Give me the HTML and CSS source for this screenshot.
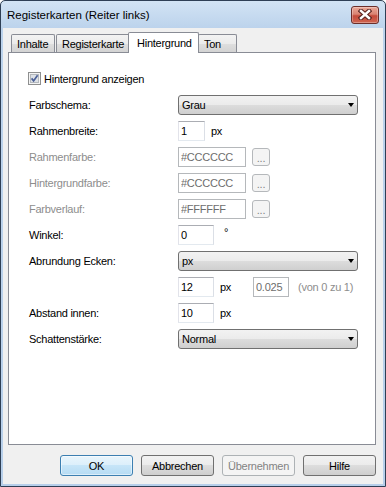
FILE: index.html
```html
<!DOCTYPE html>
<html lang="de">

<head>
    <meta charset="UTF-8">
    <meta name="viewport" content="width=device-width, initial-scale=1.0">
    <title>Registerkarten (Reiter links)</title>
    <link rel="stylesheet" href="styles.css">
</head>

<body>
    <div class="window">
        <div class="titlebar">
            <span class="title">Registerkarten (Reiter links)</span>
            <div class="close-btn">
                <svg width="14" height="11" viewBox="0 0 14 11">
                    <path d="M3 2 L11 9 M11 2 L3 9" stroke="#5b2621" stroke-width="4.6" stroke-linecap="square" fill="none"/>
                    <path d="M3 2 L11 9 M11 2 L3 9" stroke="#fff" stroke-width="2.4" stroke-linecap="square" fill="none"/>
                </svg>
            </div>
        </div>
        <div class="client">
            <div class="tabs">
                <div class="tab tab-inhalte">Inhalte</div>
                <div class="tab tab-register">Registerkarte</div>
                <div class="tab tab-active">Hintergrund</div>
                <div class="tab tab-ton">Ton</div>
            </div>
            <div class="panel">
                <div class="check-row">
                    <span class="checkbox">
                        <svg width="13" height="13" viewBox="0 0 13 13">
                            <rect x="0.5" y="0.5" width="12" height="12" fill="#f4f4f4" stroke="#8e8f8f"/>
                            <rect x="2.5" y="2.5" width="8" height="8" fill="#dde1e6" stroke="#b4b8bd"/>
                            <path d="M3.6 6.4 L5.6 8.9 L9.6 3.3" fill="none" stroke="#4a5f97" stroke-width="1.7"/>
                        </svg>
                    </span>
                    Hintergrund anzeigen
                </div>
                <div class="form">
                    <div class="row">
                        <span class="label">Farbschema:</span>
                        <div class="combo"><span>Grau</span><span class="arrow"></span></div>
                    </div>
                    <div class="row">
                        <span class="label">Rahmenbreite:</span>
                        <input class="textbox w27" type="text" value="1">
                        <span class="unit">px</span>
                    </div>
                    <div class="row">
                        <span class="label disabled">Rahmenfarbe:</span>
                        <input class="textbox w68" type="text" value="#CCCCCC" disabled>
                        <span class="dots">...</span>
                    </div>
                    <div class="row">
                        <span class="label disabled">Hintergrundfarbe:</span>
                        <input class="textbox w68" type="text" value="#CCCCCC" disabled>
                        <span class="dots">...</span>
                    </div>
                    <div class="row">
                        <span class="label disabled">Farbverlauf:</span>
                        <input class="textbox w68" type="text" value="#FFFFFF" disabled>
                        <span class="dots">...</span>
                    </div>
                    <div class="row">
                        <span class="label">Winkel:</span>
                        <input class="textbox w36" type="text" value="0">
                        <span class="unit degree">°</span>
                    </div>
                    <div class="row">
                        <span class="label">Abrundung Ecken:</span>
                        <div class="combo"><span>px</span><span class="arrow"></span></div>
                    </div>
                    <div class="row">
                        <span class="label"></span>
                        <input class="textbox w36" type="text" value="12">
                        <span class="unit unit-wide">px</span>
                        <input class="textbox w36" type="text" value="0.025" disabled>
                        <span class="hint">(von 0 zu 1)</span>
                    </div>
                    <div class="row">
                        <span class="label">Abstand innen:</span>
                        <input class="textbox w36" type="text" value="10">
                        <span class="unit">px</span>
                    </div>
                    <div class="row">
                        <span class="label">Schattenstärke:</span>
                        <div class="combo"><span>Normal</span><span class="arrow"></span></div>
                    </div>
                </div>
            </div>
            <div class="buttons">
                <button class="btn btn-default">OK</button>
                <button class="btn">Abbrechen</button>
                <button class="btn" disabled>Übernehmen</button>
                <button class="btn">Hilfe</button>
            </div>
        </div>
    </div>
</body>

</html>
```

FILE: styles.css
```css
body {
    margin: 0;
    font-family: "Liberation Sans", Arial, sans-serif;
    font-size: 11px;
    letter-spacing: -0.25px;
    color: #000;
}

.window {
    width: 386px;
    height: 487px;
    box-sizing: border-box;
    border: 1px solid #2e3f55;
    border-radius: 5px 5px 0 0;
    padding: 0 2px 2px;
    background: linear-gradient(#d2e3f4, #bcd3ec 27px, #b7cfea);
    display: flex;
    flex-direction: column;
}

.titlebar {
    height: 27px;
    display: flex;
    align-items: center;
    justify-content: space-between;
    padding: 0 4px 0 4px;
}

.title {
    font-size: 11.5px;
    letter-spacing: 0;
}

.close-btn {
    box-sizing: border-box;
    width: 28px;
    height: 18px;
    border: 1px solid #6b2e2a;
    border-radius: 3px;
    background: linear-gradient(#eaa898, #d98372 45%, #c44a3a 55%, #cf6551);
    box-shadow: inset 0 0 0 1px rgba(255, 255, 255, 0.3);
    display: flex;
    align-items: center;
    justify-content: center;
}

.client {
    flex: 1;
    background-color: #f0f0f0;
    padding: 4px 7px 8px 5px;
    display: flex;
    flex-direction: column;
}

.tabs {
    display: flex;
    align-items: flex-end;
    height: 21px;
    margin-bottom: -1px;
    padding-left: 3px;
    position: relative;
    z-index: 1;
}

.tab {
    box-sizing: border-box;
    height: 18px;
    margin-bottom: 1px;
    border: 1px solid #898c95;
    border-bottom: 0;
    border-radius: 2px 2px 0 0;
    background: linear-gradient(#f3f3f3, #ebebeb 50%, #dfdfdf 50%, #d3d3d3);
    padding: 2px 0 0 5px;
    line-height: 14px;
    white-space: nowrap;
}

.tab-inhalte {
    width: 44px;
}

.tab-register {
    width: 74px;
    margin-left: 1px;
}

.tab-active {
    width: 71px;
    height: 21px;
    margin: 0 0 0 -2px;
    padding: 3px 0 0 8px;
    background: #fff;
    position: relative;
    z-index: 2;
}

.tab-ton {
    width: 39px;
    margin-left: -1px;
}

.panel {
    box-sizing: border-box;
    height: 393px;
    border: 1px solid #898c95;
    background-color: #fff;
    padding: 19px 0 0 20px;
}

.check-row {
    display: flex;
    align-items: center;
    height: 13px;
    margin-left: -1px;
    gap: 3px;
}

.checkbox {
    width: 13px;
    height: 13px;
    display: flex;
}

.form {
    margin-top: 10px;
    display: flex;
    flex-direction: column;
    gap: 6px;
}

.row {
    display: flex;
    align-items: center;
    height: 20px;
}

.label {
    width: 149px;
    flex: none;
}

.label.disabled {
    color: #8d8d8d;
}

.combo {
    box-sizing: border-box;
    width: 180px;
    height: 20px;
    border: 1px solid #707070;
    border-radius: 3px;
    background: linear-gradient(#f2f2f2, #ebebeb 50%, #dddddd 50%, #cfcfcf);
    display: flex;
    align-items: center;
    justify-content: space-between;
    padding: 0 3px 0 3px;
}

.arrow {
    width: 0;
    height: 0;
    border-top: 4px solid #000;
    border-left: 3.5px solid transparent;
    border-right: 3.5px solid transparent;
}

.textbox {
    box-sizing: border-box;
    height: 20px;
    margin: 0;
    border: 1px solid;
    border-color: #abadb3 #dbdfe6 #e3e9ef #e2e3ea;
    padding: 0 2px;
    font: inherit;
    letter-spacing: inherit;
    color: #000;
    background-color: #fff;
    outline: none;
}

.textbox:disabled {
    border-color: #b5b8bb;
    color: #6d6d6d;
    background-color: #fff;
}

.w27 {
    width: 27px;
}

.w36 {
    width: 36px;
}

.w68 {
    width: 68px;
}

.unit {
    margin-left: 6px;
}

.degree {
    margin-left: 10px;
    align-self: flex-start;
    margin-top: 1px;
}

.unit-wide {
    width: 33px;
    flex: none;
}

.hint {
    margin-left: 9px;
    color: #8d8d8d;
}

.dots {
    box-sizing: border-box;
    width: 18px;
    height: 18px;
    margin-left: 6px;
    border: 1px solid #b5b8bb;
    border-radius: 3px;
    background-color: #f4f4f4;
    color: #838383;
    text-align: center;
    padding-top: 1px;
    line-height: 16px;
}

.buttons {
    margin-top: 10px;
    display: flex;
    justify-content: flex-end;
    gap: 8px;
}

.btn {
    box-sizing: border-box;
    width: 73px;
    height: 21px;
    margin: 0;
    padding: 0;
    border: 1px solid #707070;
    border-radius: 3px;
    background: linear-gradient(#f2f2f2, #ebebeb 50%, #dddddd 50%, #cfcfcf);
    font: inherit;
    letter-spacing: inherit;
    color: #000;
}

.btn-default {
    border-color: #3c7fb1;
    background: linear-gradient(#e9f5fc, #dbeffb 50%, #c6e5f8 50%, #b6dbf3);
    box-shadow: inset 0 0 0 1px rgba(255, 255, 255, 0.5);
}

.btn:disabled {
    border-color: #adb2b5;
    background: #f4f4f4;
    color: #838383;
}
```
